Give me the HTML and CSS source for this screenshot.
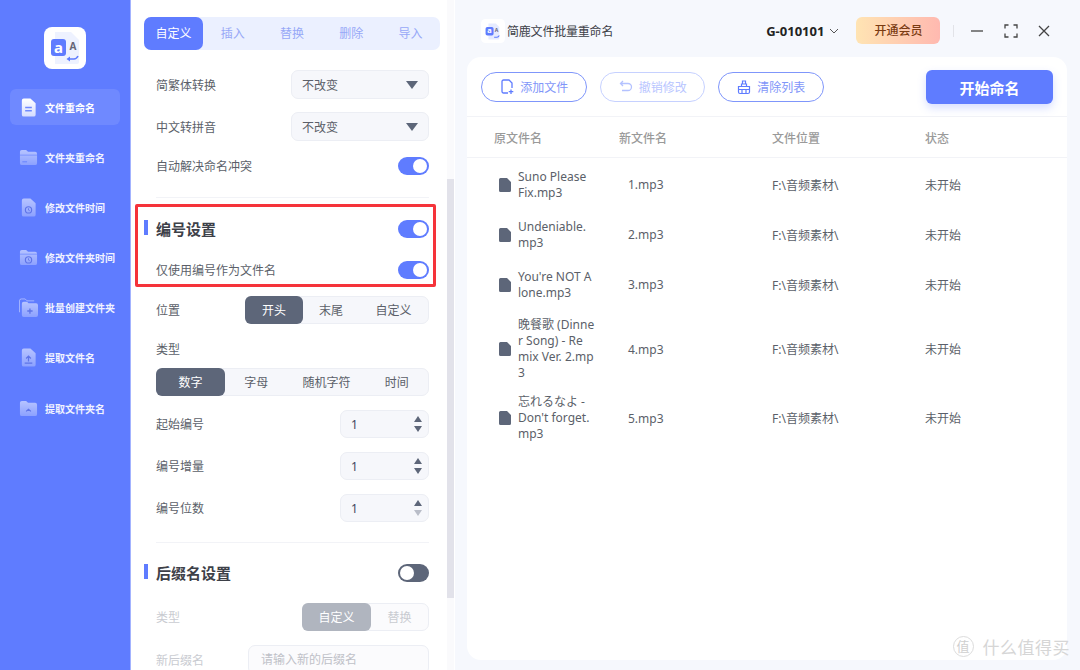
FILE: index.html
```html
<!DOCTYPE html>
<html lang="zh-CN">
<head>
  <meta charset="UTF-8">
  <title>简鹿文件批量重命名</title>
  <link rel="stylesheet" href="styles.css">
</head>
<body>
  <svg class="defs" width="0" height="0">
    <defs>
      <linearGradient id="fade" x1="0" y1="0" x2="0" y2="1">
        <stop offset="0" stop-color="#ffffff" stop-opacity=".55"/>
        <stop offset="1" stop-color="#ffffff" stop-opacity=".28"/>
      </linearGradient>
      <linearGradient id="fade-on" x1="0" y1="0" x2="0" y2="1">
        <stop offset="0" stop-color="#ffffff"/>
        <stop offset="1" stop-color="#d5dcff"/>
      </linearGradient>
    </defs>
  </svg>

  <div class="app">
    <aside class="sidebar">
      <div class="logo">
        <svg width="42" height="42" viewBox="0 0 42 42">
          <path d="M11 5h16l8 8v22a2 2 0 0 1-2 2H11z" fill="#eef2ff"/>
          <rect x="7" y="12" width="15" height="17" rx="3" fill="#5f7cff"/>
          <text x="14.5" y="25.5" class="logo-a">a</text>
          <text x="29" y="23" class="logo-b">A</text>
          <path d="M24 32h6c2 0 3-1 4-3" fill="none" stroke="#5f7cff" stroke-width="1.6"/>
          <path d="M26 29.5v5l-3.500-2.500z" fill="#5f7cff"/>
        </svg>
      </div>
      <nav class="nav">
        <a class="nav-item active">
          <svg class="nav-icon" viewBox="0 0 20 20"><path d="M3 2.500a2 2 0 0 1 2-2h7l5.500 5V17.500a2 2 0 0 1-2 2H5a2 2 0 0 1-2-2z" fill="url(#fade-on)"/><path d="M6.500 10h7M6.500 13.500h7" stroke="#6f89ff" stroke-width="1.500"/></svg>
          文件重命名
        </a>
        <a class="nav-item">
          <svg class="nav-icon" viewBox="0 0 20 20"><path d="M1 4a2 2 0 0 1 2-2h4.500l2 2H17a2 2 0 0 1 2 2v10a2 2 0 0 1-2 2H3a2 2 0 0 1-2-2z" fill="url(#fade)"/><path d="M1 7.500h18" stroke="#6f89ff" stroke-width=".8"/><path d="M3.500 14.500h5" stroke="#6f89ff" stroke-width="1.300"/></svg>
          文件夹重命名
        </a>
        <a class="nav-item">
          <svg class="nav-icon" viewBox="0 0 20 20"><path d="M3 2.500a2 2 0 0 1 2-2h7l5.500 5V17.500a2 2 0 0 1-2 2H5a2 2 0 0 1-2-2z" fill="url(#fade)"/><circle cx="10" cy="12.500" r="3.300" fill="none" stroke="#5f74e8" stroke-width="1.200"/><path d="M10 10.800v1.900l1.300.7" fill="none" stroke="#5f74e8" stroke-width=".9"/></svg>
          修改文件时间
        </a>
        <a class="nav-item">
          <svg class="nav-icon" viewBox="0 0 20 20"><path d="M1 4a2 2 0 0 1 2-2h4.500l2 2H17a2 2 0 0 1 2 2v10a2 2 0 0 1-2 2H3a2 2 0 0 1-2-2z" fill="url(#fade)"/><path d="M1 6.500h18" stroke="#6f89ff" stroke-width=".8"/><circle cx="10" cy="12.500" r="3.300" fill="none" stroke="#5f74e8" stroke-width="1.200"/><path d="M10 10.800v1.900l1.300.7" fill="none" stroke="#5f74e8" stroke-width=".9"/></svg>
          修改文件夹时间
        </a>
        <a class="nav-item">
          <svg class="nav-icon" viewBox="0 0 20 20"><path d="M.5 15V3a2 2 0 0 1 2-2h4l2 2H16" fill="none" stroke="#ffffff" stroke-opacity=".45" stroke-width="1"/><path d="M3 6a2 2 0 0 1 2-2h3.500l1.500 1.500H18a2 2 0 0 1 2 2V18a2 2 0 0 1-2 2H5a2 2 0 0 1-2-2z" fill="url(#fade)"/><path d="M11.500 11v5.500M8.700 13.700h5.600" stroke="#5f74e8" stroke-width="1.400"/></svg>
          批量创建文件夹
        </a>
        <a class="nav-item">
          <svg class="nav-icon" viewBox="0 0 20 20"><path d="M3 2.500a2 2 0 0 1 2-2h7l5.500 5V17.500a2 2 0 0 1-2 2H5a2 2 0 0 1-2-2z" fill="url(#fade)"/><path d="M10 14.200V8.500M7.500 11l2.500-2.500 2.500 2.500M6 16h8" fill="none" stroke="#5f74e8" stroke-width="1.300"/></svg>
          提取文件名
        </a>
        <a class="nav-item">
          <svg class="nav-icon" viewBox="0 0 20 20"><path d="M1 4a2 2 0 0 1 2-2h4.500l2 2H17a2 2 0 0 1 2 2v10a2 2 0 0 1-2 2H3a2 2 0 0 1-2-2z" fill="url(#fade)"/><path d="M7.500 13l2.500-2.200 2.500 2.200" fill="none" stroke="#5f74e8" stroke-width="1.300"/></svg>
          提取文件夹名
        </a>
      </nav>
    </aside>

    <section class="panel">
      <div class="tabs">
        <span class="tab active">自定义</span>
        <span class="tab">插入</span>
        <span class="tab">替换</span>
        <span class="tab">删除</span>
        <span class="tab">导入</span>
      </div>

      <div class="row row-select first">
        <span>简繁体转换</span>
        <div class="select">不改变<i class="caret"></i></div>
      </div>
      <div class="row row-select">
        <span>中文转拼音</span>
        <div class="select">不改变<i class="caret"></i></div>
      </div>
      <div class="row row-toggle">
        <span>自动解决命名冲突</span>
        <i class="toggle on"></i>
      </div>

      <hr class="divider">

      <div class="section-head">
        <h2>编号设置</h2>
        <i class="toggle on"></i>
      </div>
      <div class="row row-only">
        <span>仅使用编号作为文件名</span>
        <i class="toggle on"></i>
      </div>
      <div class="row row-seg">
        <span>位置</span>
        <div class="seg seg-pos">
          <span class="active">开头</span><span>末尾</span><span>自定义</span>
        </div>
      </div>
      <div class="type-label">类型</div>
      <div class="seg seg-type">
        <span class="active">数字</span><span>字母</span><span>随机字符</span><span>时间</span>
      </div>

      <div class="row row-num first-num">
        <span>起始编号</span>
        <div class="num">1<b class="spin"><i class="up"></i><i class="down"></i></b></div>
      </div>
      <div class="row row-num">
        <span>编号增量</span>
        <div class="num">1<b class="spin"><i class="up"></i><i class="down"></i></b></div>
      </div>
      <div class="row row-num">
        <span>编号位数</span>
        <div class="num">1<b class="spin"><i class="up"></i><i class="down off"></i></b></div>
      </div>

      <hr class="divider second">

      <div class="section-head suffix">
        <h2>后缀名设置</h2>
        <i class="toggle"></i>
      </div>
      <div class="row row-seg disabled suffix-type">
        <span>类型</span>
        <div class="seg seg-suffix">
          <span class="active">自定义</span><span>替换</span>
        </div>
      </div>
      <div class="row disabled suffix-name">
        <span>新后缀名</span>
        <div class="text-input">请输入新的后缀名</div>
      </div>

      <div class="scrollbar"><div class="thumb"></div></div>
    </section>

    <main class="main">
      <header class="titlebar">
        <svg class="app-icon" width="24" height="24" viewBox="0 0 42 42">
          <rect width="42" height="42" rx="8" fill="#fff"/>
          <path d="M13 8h13l6 6v20a2 2 0 0 1-2 2H13z" fill="#e6ebff"/>
          <rect x="8" y="14" width="14" height="15" rx="3" fill="#5f7cff"/>
          <text x="15" y="25" class="logo-a small">a</text>
          <text x="27" y="22" class="logo-b small">A</text>
          <path d="M23 32h5c2 0 3-1 4-3" fill="none" stroke="#5f7cff" stroke-width="1.800"/>
        </svg>
        <span class="app-name">简鹿文件批量重命名</span>
        <span class="account">G-010101</span>
        <svg class="chevron" width="10" height="6" viewBox="0 0 10 6"><path d="M1 1l4 4 4-4" fill="none" stroke="#555" stroke-width="1"/></svg>
        <span class="vip">开通会员</span>
        <i class="bar-sep"></i>
        <div class="win-btns">
          <svg width="14" height="14" viewBox="0 0 14 14"><path d="M1 7h12" stroke="#444" stroke-width="1.300"/></svg>
          <svg width="14" height="14" viewBox="0 0 14 14"><path d="M1 4.500V1h3.500M9.500 1H13v3.500M13 9.500V13H9.500M4.500 13H1V9.500" fill="none" stroke="#444" stroke-width="1.300"/></svg>
          <svg width="14" height="14" viewBox="0 0 14 14"><path d="M2 2l10 10M12 2L2 12" stroke="#444" stroke-width="1.300"/></svg>
        </div>
      </header>

      <div class="card">
        <div class="toolbar">
          <button class="btn">
            <svg width="16" height="16" viewBox="0 0 16 16"><path d="M9 14H4.500A1.500 1.500 0 0 1 3 12.500v-10A1.500 1.500 0 0 1 4.500 1H10l3 3v5" fill="none" stroke="#5f7cff" stroke-width="1.300"/><path d="M12 10.500v4.500M9.700 12.700h4.600" stroke="#5f7cff" stroke-width="1.300"/></svg>
            添加文件
          </button>
          <button class="btn muted">
            <svg width="16" height="16" viewBox="0 0 16 16"><path d="M5 2L2.500 4.500 5 7M2.500 4.500H10a3.500 3.500 0 0 1 0 7H4" fill="none" stroke="#b4c2ff" stroke-width="1.300"/></svg>
            撤销修改
          </button>
          <button class="btn">
            <svg width="16" height="16" viewBox="0 0 16 16"><path d="M2.500 7.500h11V13a1.500 1.500 0 0 1-1.500 1.500H4A1.500 1.500 0 0 1 2.500 13zM5.500 7.500V5h5v2.500M6.500 5V2h3v3M2.500 10.500h11M6 11v3.500M10 11v3.500" fill="none" stroke="#5f7cff" stroke-width="1.200"/></svg>
            清除列表
          </button>
          <button class="start">开始命名</button>
        </div>

        <div class="table-head">
          <span>原文件名</span><span>新文件名</span><span>文件位置</span><span>状态</span>
        </div>

        <div class="table-body">
          <div class="table-row">
            <div class="file"><svg class="doc" viewBox="0 0 12 14"><path d="M0 1.500A1.500 1.500 0 0 1 1.500 0H8l4 4v8.500a1.500 1.500 0 0 1-1.500 1.500h-9A1.500 1.500 0 0 1 0 12.500z"/></svg><span>Suno Please<br>Fix.mp3</span></div>
            <span>1.mp3</span><span>F:\音频素材\</span><span>未开始</span>
          </div>
          <div class="table-row">
            <div class="file"><svg class="doc" viewBox="0 0 12 14"><path d="M0 1.500A1.500 1.500 0 0 1 1.500 0H8l4 4v8.500a1.500 1.500 0 0 1-1.500 1.500h-9A1.500 1.500 0 0 1 0 12.500z"/></svg><span>Undeniable.<br>mp3</span></div>
            <span>2.mp3</span><span>F:\音频素材\</span><span>未开始</span>
          </div>
          <div class="table-row">
            <div class="file"><svg class="doc" viewBox="0 0 12 14"><path d="M0 1.500A1.500 1.500 0 0 1 1.500 0H8l4 4v8.500a1.500 1.500 0 0 1-1.500 1.500h-9A1.500 1.500 0 0 1 0 12.500z"/></svg><span>You're NOT A<br>lone.mp3</span></div>
            <span>3.mp3</span><span>F:\音频素材\</span><span>未开始</span>
          </div>
          <div class="table-row tall">
            <div class="file"><svg class="doc" viewBox="0 0 12 14"><path d="M0 1.500A1.500 1.500 0 0 1 1.500 0H8l4 4v8.500a1.500 1.500 0 0 1-1.500 1.500h-9A1.500 1.500 0 0 1 0 12.500z"/></svg><span>晚餐歌 (Dinne<br>r Song) - Re<br>mix Ver. 2.mp<br>3</span></div>
            <span>4.mp3</span><span>F:\音频素材\</span><span>未开始</span>
          </div>
          <div class="table-row mid">
            <div class="file"><svg class="doc" viewBox="0 0 12 14"><path d="M0 1.500A1.500 1.500 0 0 1 1.500 0H8l4 4v8.500a1.500 1.500 0 0 1-1.500 1.500h-9A1.500 1.500 0 0 1 0 12.500z"/></svg><span>忘れるなよ -<br>Don't forget.<br>mp3</span></div>
            <span>5.mp3</span><span>F:\音频素材\</span><span>未开始</span>
          </div>
        </div>
      </div>
    </main>

    <!-- annotation and watermark sit on top of the shot -->
    <div class="highlight"></div>
    <div class="watermark"><span class="mark">值</span>什么值得买</div>
  </div>
</body>
</html>
```

FILE: styles.css
```css
:root {
  --blue: #5f7cff;
  --slate: #5d6679;
  --text: #5b5f69;
  --field: #f6f7fb;
  --field-line: #eceef4;
}

* {
  margin: 0;
  padding: 0;
  box-sizing: border-box;
}

body {
  font-family: "Noto Sans", "Noto Sans CJK SC", sans-serif;
  font-size: 12px;
  color: var(--text);
  background: #fff;
}

.defs {
  position: absolute;
}

.app {
  position: relative;
  display: flex;
  width: 1080px;
  height: 670px;
  overflow: hidden;
}

/* Sidebar */
.sidebar {
  flex: 0 0 131px;
  background: var(--blue);
  border-right: 1px solid #a3b3ff;
  padding-top: 27px;
}

.logo {
  width: 42px;
  height: 42px;
  margin-left: 44px;
  background: #fff;
  border-radius: 8px;
}

.logo-a {
  font-size: 15px;
  font-weight: 700;
  fill: #fff;
  text-anchor: middle;
}

.logo-b {
  font-size: 10px;
  font-weight: 700;
  fill: #667;
  text-anchor: middle;
}

.logo-a.small {
  font-size: 13px;
}

.logo-b.small {
  font-size: 9px;
}

.nav {
  display: flex;
  flex-direction: column;
  gap: 14.2px;
  margin: 20px 10px 0;
}

.nav-item {
  display: flex;
  align-items: center;
  gap: 7px;
  height: 36px;
  padding-left: 9px;
  border-radius: 6px;
  color: #f1f3ff;
  font-size: 10px;
  font-weight: 700;
  white-space: nowrap;
}

.nav-item.active {
  background: rgba(255, 255, 255, 0.1);
  color: #fff;
}

.nav-icon {
  flex: none;
  width: 19px;
  height: 19px;
}

/* Settings panel */
.panel {
  position: relative;
  flex: 0 0 324px;
  min-width: 0;
  padding: 17px 26px 0 25px;
  background: #fff;
}

.tabs {
  display: flex;
  width: 296px;
  height: 33px;
  margin-left: -12px;
  background: #ebf0ff;
  border-radius: 7px;
}

.tab {
  flex: 1;
  line-height: 33px;
  text-align: center;
  color: #97a8f7;
}

.tab.active {
  background: var(--blue);
  color: #fff;
  border-radius: 7px;
}

.row {
  display: flex;
  justify-content: space-between;
  align-items: center;
}

.row-select {
  height: 29px;
  margin-top: 13px;
}

.row-select.first {
  margin-top: 20px;
}

.select {
  position: relative;
  width: 138px;
  height: 29px;
  padding-left: 10px;
  line-height: 29px;
  background: var(--field);
  border: 1px solid var(--field-line);
  border-radius: 7px;
}

.caret {
  position: absolute;
  top: 10px;
  right: 10px;
  border-style: solid;
  border-width: 8px 6px 0;
  border-color: var(--slate) transparent transparent;
}

.row-toggle {
  height: 18px;
  margin-top: 16px;
}

.toggle {
  position: relative;
  display: block;
  width: 31px;
  height: 18px;
  border-radius: 9px;
  background: var(--slate);
}

.toggle::after {
  content: "";
  position: absolute;
  top: 2px;
  left: 2px;
  width: 14px;
  height: 14px;
  border-radius: 50%;
  background: #fff;
}

.toggle.on {
  background: var(--blue);
}

.toggle.on::after {
  left: 15px;
}

.divider {
  border: 0;
  border-top: 1px solid #f2f3f7;
  margin-top: 22px;
}

.section-head {
  display: flex;
  position: relative;
  justify-content: space-between;
  align-items: center;
  height: 20px;
  margin-top: 21px;
}

.section-head h2 {
  font-size: 15px;
  font-weight: 700;
  color: #3d4048;
  margin-top: -2px;
}

.section-head::before {
  content: "";
  position: absolute;
  left: -12px;
  top: 1px;
  width: 4px;
  height: 15px;
  background: var(--blue);
}

.row-only {
  height: 18px;
  margin-top: 22px;
}

.row-seg {
  height: 28px;
  margin-top: 17px;
}

.seg {
  display: flex;
  height: 28px;
  background: var(--field);
  border: 1px solid var(--field-line);
  border-radius: 7px;
}

.seg span {
  flex: 1;
  line-height: 27px;
  text-align: center;
  white-space: nowrap;
}

.seg .active {
  background: var(--slate);
  color: #fff;
  border-radius: 6px;
  margin: -1px 0 -1px -1px;
  line-height: 29px;
}

.seg-pos {
  width: 184px;
}

.seg-pos .active {
  flex: 0 0 58px;
}

.seg-pos span:nth-child(2) {
  flex: 0 0 56px;
}

.type-label {
  margin-top: 17px;
  line-height: 18px;
}

.seg-type {
  margin-top: 9px;
  width: 273px;
}

.seg-type .active {
  flex: 0 0 69px;
}

.seg-type span:nth-child(3) {
  flex: 0 0 78px;
}

.row-num {
  height: 28px;
  margin-top: 14px;
}

.num {
  position: relative;
  width: 89px;
  height: 28px;
  padding-left: 10px;
  line-height: 27px;
  color: #3e4660;
  background: var(--field);
  border: 1px solid var(--field-line);
  border-radius: 7px;
}

.spin {
  position: absolute;
  top: 5px;
  right: 6px;
  display: flex;
  flex-direction: column;
  gap: 4px;
}

.spin i {
  display: block;
  border-style: solid;
}

.spin .up {
  border-width: 0 4px 6px;
  border-color: transparent transparent var(--slate);
}

.spin .down {
  border-width: 6px 4px 0;
  border-color: var(--slate) transparent transparent;
}

.spin .down.off {
  border-top-color: #b9bdc8;
}

.divider.second {
  margin-top: 20px;
}

.section-head.suffix {
  margin-top: 20px;
}

.disabled {
  color: #c9cbd1;
}

.suffix-type {
  margin-top: 20px;
}

.seg-suffix {
  width: 127px;
  background: #fbfbfd;
}

.seg-suffix .active {
  flex: 0 0 69px;
  background: #b0b5bf;
}

.suffix-name {
  margin-top: 14px;
}

.text-input {
  width: 181px;
  height: 30px;
  padding-left: 12px;
  line-height: 28px;
  background: #fbfbfd;
  border: 1px solid var(--field-line);
  border-radius: 7px;
  color: #bfc1c8;
}

.scrollbar {
  position: absolute;
  top: 0;
  right: 1px;
  bottom: 0;
  width: 7px;
  background: #fafafc;
}

.thumb {
  width: 7px;
  height: 419px;
  margin-top: 179px;
  background: #e2e2ea;
}

/* Right side */
.main {
  flex: 1;
  display: flex;
  flex-direction: column;
  background: #f6f8fd;
}

.titlebar {
  display: flex;
  align-items: center;
  height: 57px;
  padding: 4px 0 0 26px;
  flex: none;
}

.app-name {
  margin-left: 2px;
  letter-spacing: -0.2px;
  color: #3d4048;
}

.account {
  margin-left: 153px;
  font-size: 13px;
  font-weight: 700;
  color: #222;
}

.chevron {
  margin-left: 5px;
}

.vip {
  width: 84px;
  height: 27px;
  margin-left: 17px;
  line-height: 27px;
  text-align: center;
  font-weight: 500;
  color: #7a3b12;
  background: linear-gradient(90deg, #ffe4b3, #ffb9b0);
  border-radius: 6px;
}

.bar-sep {
  width: 1px;
  height: 12px;
  margin-left: 13px;
  background: #e2e3e8;
}

.win-btns {
  display: flex;
  gap: 19.500px;
  margin-left: 16px;
}

.card {
  width: 600px;
  height: 603px;
  margin-left: 12px;
  background: #fff;
  border-radius: 14px;
}

.toolbar {
  display: flex;
  align-items: center;
  position: relative;
  gap: 13px;
  height: 60px;
  padding: 0 14px;
  border-bottom: 1px solid #f2f3f7;
}

.btn {
  display: flex;
  align-items: center;
  justify-content: center;
  gap: 5px;
  width: 105.500px;
  height: 30px;
  font: inherit;
  color: #7f96f9;
  background: #fff;
  border: 1px solid #7f96fb;
  border-radius: 15px;
}

.btn.muted {
  color: #b9c6ff;
  border-color: #c6d1ff;
}

.start {
  position: absolute;
  top: 13px;
  right: 14px;
  width: 127px;
  height: 34px;
  font: inherit;
  font-size: 15px;
  font-weight: 700;
  color: #fff;
  background: var(--blue);
  border: 0;
  border-radius: 6px;
  box-shadow: 0 4px 8px rgba(95, 124, 255, 0.25);
}

.table-head,
.table-row {
  display: grid;
  align-items: center;
}

.table-head {
  grid-template-columns: 125px 153px 153px 1fr;
  height: 41px;
  padding: 2px 0 0 27px;
  font-weight: 500;
  color: #9a9a9a;
  border-bottom: 1px solid #f2f3f7;
}

.table-body {
  padding-top: 1.500px;
}

.table-row {
  grid-template-columns: 129px 144px 153px 1fr;
  height: 50.200px;
  padding-left: 32px;
  color: #5b5f69;
}

.table-row.tall {
  height: 78px;
}

.table-row.mid {
  height: 60px;
}

.file {
  display: flex;
  align-items: center;
  gap: 7px;
  white-space: nowrap;
  line-height: 16px;
}

.doc {
  flex: none;
  width: 12px;
  height: 14px;
  fill: var(--slate);
}

/* Overlays */
.highlight {
  position: absolute;
  left: 135px;
  top: 204px;
  width: 301px;
  height: 83px;
  border: 3px solid #f5333a;
  border-radius: 2px;
}

.watermark {
  position: absolute;
  right: 10px;
  bottom: 11px;
  display: flex;
  align-items: center;
  gap: 9px;
  font-size: 17px;
  color: #d6d6d6;
  letter-spacing: 0.5px;
}

.mark {
  width: 21px;
  height: 21px;
  line-height: 18px;
  text-align: center;
  font-size: 13px;
  letter-spacing: 0;
  color: #cfcfcf;
  border: 1px solid #dcdcdc;
  border-radius: 50%;
}
```
